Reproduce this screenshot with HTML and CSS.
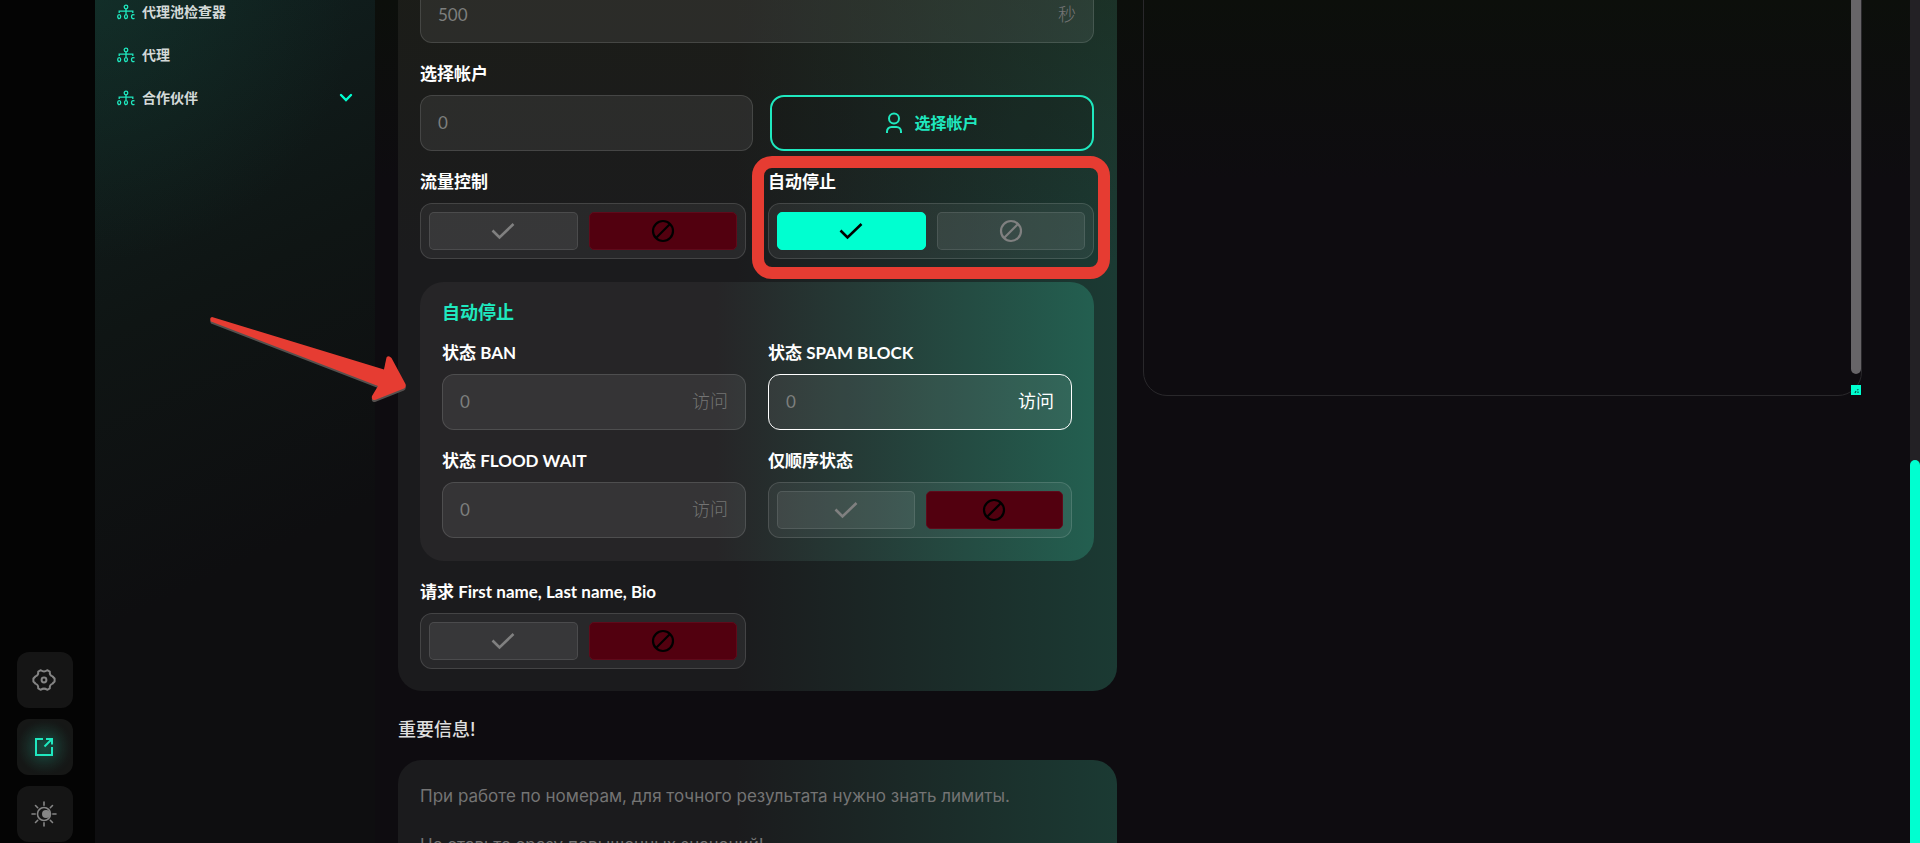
FILE: index.html
```html
<!DOCTYPE html>
<html lang="zh-CN">
<head>
<meta charset="utf-8">
<meta name="viewport" content="width=device-width, initial-scale=1">
<title>自动停止</title>
<link rel="stylesheet" href="styles.css">
</head>
<body>
<svg class="sprite" aria-hidden="true">
  <symbol id="i-tree" viewBox="0 0 18 16">
    <g fill="none" stroke="currentColor" stroke-width="1.3">
      <circle cx="9" cy="3" r="1.800"/><path d="M9 5v5.5M2.200 9V7.200h13.600V9"/>
      <ellipse cx="2.200" cy="12.600" rx="1.500" ry="2"/><ellipse cx="9" cy="12.600" rx="1.500" ry="2"/><path d="M17.500 10.900q-3-1-3 1.700t3 1.700"/>
    </g>
  </symbol>
  <symbol id="i-check" viewBox="0 0 24 24"><path d="M1.5 11.5l7 7L22.500 5" fill="none" stroke="currentColor" stroke-width="2.600"/></symbol>
  <symbol id="i-ban" viewBox="0 0 24 24"><g fill="none" stroke="currentColor" stroke-width="2.2"><circle cx="12" cy="12" r="10"/><path d="M5 19L19 5"/></g></symbol>
</svg>
<div class="app">
  <aside class="rail">
    <button class="rail-btn" type="button" aria-label="设置">
      <svg width="24" height="24" viewBox="0 0 24 24" fill="none" stroke="currentColor" stroke-width="2" stroke-linejoin="round"><circle cx="12" cy="12" r="2.400"/><path d="M8.800 2.200Q12 4.600 15.200 2.200L17.800 3.600Q17.400 7.300 20.600 8.400Q21 9 22.600 10.500V13.500Q21 15 20.600 15.600Q17.400 16.700 17.800 20.400L15.200 21.800Q12 19.400 8.800 21.800L6.200 20.400Q6.600 16.700 3.400 15.600Q3 15 1.400 13.500V10.500Q3 9 3.400 8.400Q6.600 7.300 6.200 3.600z"/></svg>
    </button>
    <button class="rail-btn active" type="button" aria-label="打开">
      <svg width="20" height="20" viewBox="0 0 20 20" fill="none" stroke="currentColor" stroke-width="2"><path d="M9 2H2v16h16v-8M12 2H18v5.500M18 2l-7.500 7.500"/></svg>
    </button>
    <button class="rail-btn" type="button" aria-label="主题">
      <svg width="26" height="26" viewBox="0 0 26 26" fill="none" stroke="currentColor" stroke-width="1.600" stroke-linecap="round"><circle cx="13" cy="13" r="6.500"/><path d="M13 1v3.200M13 21.800V25M1 13h3.200M21.800 13H25M4.500 4.500l2.200 2.200M19.300 19.300l2.200 2.200M4.500 21.500l2.200-2.200M19.300 6.700l2.200-2.200"/><path d="M15 9a4 4 0 0 0 0 8a6 6 0 0 0 3.500-1a6 6 0 0 0 0-6a6 6 0 0 0-3.500-1z" fill="currentColor" stroke="none"/></svg>
    </button>
  </aside>

  <nav class="side">
    <a class="side-link" href="#pool"><svg width="18" height="16"><use href="#i-tree"/></svg><span>代理池检查器</span></a>
    <a class="side-link" href="#proxy"><svg width="18" height="16"><use href="#i-tree"/></svg><span>代理</span></a>
    <a class="side-link" href="#partners"><svg width="18" height="16"><use href="#i-tree"/></svg><span>合作伙伴</span>
      <svg class="chev" width="14" height="10" viewBox="0 0 14 10" fill="none" stroke="currentColor" stroke-width="2.400" stroke-linecap="round"><path d="M2 2l5 5 5-5"/></svg></a>
  </nav>

  <main class="main">
    <div class="column">
      <form class="card form">
        <div class="control"><input type="text" placeholder="500" aria-label="秒"><span class="unit">秒</span></div>
        <div class="field">
          <label class="label" for="accounts">选择帐户</label>
          <div class="pick">
            <div class="control"><input id="accounts" type="text" placeholder="0"></div>
            <button class="pick-btn" type="button"><svg width="18" height="22" viewBox="0 0 18 22" fill="none" stroke="currentColor" stroke-width="2"><circle cx="9" cy="6.500" r="5"/><path d="M2 21v-1.500a4.500 4.500 0 0 1 4.500-4.500h5a4.500 4.500 0 0 1 4.500 4.500V21"/></svg>选择帐户</button>
          </div>
        </div>
        <div class="grid">
          <div class="field">
            <span class="label" id="l-flow">流量控制</span>
            <div class="toggle" role="radiogroup" aria-labelledby="l-flow">
              <label class="opt yes"><input type="radio" name="flow" aria-label="是"><svg><use href="#i-check"/></svg></label>
              <label class="opt no"><input type="radio" name="flow" aria-label="否" checked><svg><use href="#i-ban"/></svg></label>
            </div>
          </div>
          <div class="field marked">
            <span class="label" id="l-stop">自动停止</span>
            <div class="toggle" role="radiogroup" aria-labelledby="l-stop">
              <label class="opt yes"><input type="radio" name="stop" aria-label="是" checked><svg><use href="#i-check"/></svg></label>
              <label class="opt no"><input type="radio" name="stop" aria-label="否"><svg><use href="#i-ban"/></svg></label>
            </div>
          </div>
        </div>
        <section class="sub">
          <h2 class="sub-title">自动停止</h2>
          <div class="grid">
            <div class="field">
              <label class="label" for="ban">状态 BAN</label>
              <div class="control"><input id="ban" type="text" placeholder="0"><span class="unit">访问</span></div>
            </div>
            <div class="field">
              <label class="label" for="spam">状态 SPAM BLOCK</label>
              <div class="control focus"><input id="spam" type="text" placeholder="0"><span class="unit">访问</span></div>
            </div>
            <div class="field">
              <label class="label" for="flood">状态 FLOOD WAIT</label>
              <div class="control"><input id="flood" type="text" placeholder="0"><span class="unit">访问</span></div>
            </div>
            <div class="field">
              <span class="label" id="l-seq">仅顺序状态</span>
              <div class="toggle" role="radiogroup" aria-labelledby="l-seq">
                <label class="opt yes"><input type="radio" name="seq" aria-label="是"><svg><use href="#i-check"/></svg></label>
                <label class="opt no"><input type="radio" name="seq" aria-label="否" checked><svg><use href="#i-ban"/></svg></label>
              </div>
            </div>
          </div>
          <svg class="arrow" width="200" height="90" viewBox="0 0 200 90" aria-hidden="true"><path d="M4 3L176 55.500L178.500 43.500Q180.500 41 183.500 44L197.500 70Q198.500 73 196 74.500L167 86Q163 86 164 82L170 72L3 7.500Q1 4 4 3z"/></svg>
        </section>
        <div class="grid">
          <div class="field">
            <span class="label" id="l-bio">请求 First name, Last name, Bio</span>
            <div class="toggle" role="radiogroup" aria-labelledby="l-bio">
              <label class="opt yes"><input type="radio" name="bio" aria-label="是"><svg><use href="#i-check"/></svg></label>
              <label class="opt no"><input type="radio" name="bio" aria-label="否" checked><svg><use href="#i-ban"/></svg></label>
            </div>
          </div>
        </div>
      </form>
      <h2 class="heading">重要信息!</h2>
      <section class="card notes">
        <p>При работе по номерам, для точного результата нужно знать лимиты.</p>
        <p>Не ставьте сразу повышенных значений!</p>
      </section>
    </div>
    <div class="column">
      <div class="log">
        <textarea aria-label="日志" readonly></textarea>
        <span class="log-thumb"></span>
        <svg class="log-grip" width="10" height="10" viewBox="0 0 10 10" aria-hidden="true"><path d="M4 8l1-2M6 5l1.500-.5M7 8V6.500" stroke="#075c4d" stroke-width="1.300" fill="none"/></svg>
      </div>
    </div>
  </main>
  <div class="page-scroll"><span></span></div>
</div>
</body>
</html>
```
FILE: styles.css
```css
:root {
  --accent: #00ffd0;
  --mint: #1fe8bf;
  --line: rgba(255, 255, 255, .13);
  --red: #e63c32;
}
* { box-sizing: border-box; }
body {
  margin: 0;
  background: #0e0c10;
  color: #fff;
  font-family: Inter, "Noto Sans CJK SC", sans-serif;
  font-size: 17px;
  line-height: 22px;
}
button, input, textarea { font: inherit; color: inherit; }
.sprite { position: absolute; width: 0; height: 0; }
.app { display: flex; height: 100vh; overflow: hidden; }

.rail {
  flex: 0 0 95px;
  display: flex;
  flex-direction: column;
  justify-content: flex-end;
  gap: 11px;
  padding: 0 22px 1px 17px;
  background: #040404;
}
.rail-btn {
  flex: 0 0 56px;
  display: grid;
  place-items: center;
  padding: 0 2px 0 0;
  border: 0;
  border-radius: 12px;
  background: #151515;
  color: #858585;
}
.rail-btn.active { color: var(--mint); background: radial-gradient(circle, #1a2b27 10%, #161716 70%); }
.rail-btn.active svg { filter: drop-shadow(0 0 8px #12b894); }

.side {
  flex: 0 0 280px;
  background:
    radial-gradient(ellipse 260px 260px at 0 0, rgba(22, 72, 58, .35), transparent),
    linear-gradient(155deg, #10201f, #0f1514 35%, #0e0e10 65%);
}
.side-link {
  display: flex;
  align-items: center;
  height: 43px;
  padding: 0 22px;
  gap: 7px;
  color: #d3d9d8;
  font-size: 14px;
  font-weight: 700;
  text-decoration: none;
}
.side-link:first-child { margin-top: -10px; }
.side-link svg { color: var(--mint); }
.side-link .chev { margin-left: auto; color: var(--accent); }

.main {
  flex: 1;
  min-width: 0;
  display: grid;
  grid-template-columns: 1fr 1fr;
  gap: 26px;
  padding: 0 48px 0 23px;
  background: linear-gradient(#0c0f0b, #0e0c10 180px);
}
.card {
  border-radius: 24px;
  padding: 22px 23px 22px 22px;
  background: linear-gradient(90deg, #1b1b1d 47%, #1b3a33);
}
.form {
  display: flex;
  flex-direction: column;
  gap: 20px;
  margin-top: -35px;
  background:
    linear-gradient(rgba(28, 32, 14, .35), transparent 300px),
    linear-gradient(90deg, #1b1b1d 47%, #1b3a33);
}
.field { display: flex; flex-direction: column; gap: 10px; min-width: 0; }
.label { font-family: Lato, "Noto Sans CJK SC", sans-serif; font-size: 17px; font-weight: 700; white-space: nowrap; }
.control {
  display: flex;
  align-items: center;
  min-width: 0;
  height: 56px;
  padding: 0 17px;
  border: 1px solid var(--line);
  border-radius: 12px;
  background: rgba(255, 255, 255, .07);
  color: #747474;
}
.control input {
  flex: 1;
  min-width: 0;
  padding: 0;
  border: 0;
  outline: 0;
  background: none;
  font-family: Lato, sans-serif;
}
.control input::placeholder { color: #7d7f7e; opacity: 1; }
.unit { font-size: 18px; font-weight: 300; }
.control.focus { border-color: #fff; color: #fff; }
.control.focus .unit { font-weight: 400; }
.pick { display: grid; grid-template-columns: 333fr 324fr; gap: 17px; }
.pick-btn {
  display: flex;
  align-items: center;
  justify-content: center;
  gap: 11px;
  padding: 0;
  border: 2px solid var(--mint);
  border-radius: 14px;
  background: rgba(14, 14, 16, .15);
  color: var(--mint);
  font-size: 16px;
  font-weight: 700;
}
.grid { display: grid; grid-template-columns: 1fr 1fr; gap: 20px 22px; }
.toggle {
  display: grid;
  grid-template-columns: 1fr 1fr;
  gap: 11px;
  height: 56px;
  padding: 8px;
  border: 1px solid var(--line);
  border-radius: 12px;
  background: rgba(255, 255, 255, .06);
}
.opt {
  display: grid;
  place-items: center;
  border: 1px solid rgba(255, 255, 255, .1);
  border-radius: 5px;
  background: rgba(255, 255, 255, .07);
  color: #808080;
}
.opt input { position: absolute; opacity: 0; margin: 0; }
.opt svg { width: 24px; height: 24px; }
.opt:has(:checked) { color: #000; }
.yes:has(:checked) { background: var(--accent); border-color: var(--accent); }
.no:has(:checked) { background: #52000f; border-color: #5f0a1a; }
.marked { position: relative; }
.marked::after {
  content: "";
  position: absolute;
  inset: -15px -16px -20px;
  border: 12px solid var(--red);
  border-radius: 20px;
  pointer-events: none;
}
.sub {
  position: relative;
  margin-top: 3px;
  padding: 20px 22px 23px;
  border-radius: 24px;
  background: linear-gradient(90deg, #262527 44%, #235f50);
}
.sub-title { margin: 0 0 18px; color: var(--mint); font-size: 18px; font-weight: 700; }
.arrow {
  position: absolute;
  left: -212px;
  top: 32px;
  fill: var(--red);
  filter: drop-shadow(0 2px 0 #55504e);
}
.heading { margin: 28px 0 19px; color: #dedede; font-size: 18px; font-weight: 500; }
.notes { color: #747474; font-size: 17px; padding: 25px 22px; }
.notes p { margin: 0 0 27px; white-space: nowrap; }

.log {
  position: relative;
  height: 420px;
  margin-top: -24px;
  border: 1px solid #29282b;
  border-radius: 24px;
}
.log textarea { width: 100%; height: 100%; border: 0; outline: 0; resize: none; background: none; display: block; }
.log-thumb { position: absolute; right: 0; top: 0; width: 10px; height: 397px; border-radius: 5px; background: #676568; }
.log-grip { position: absolute; right: 0; bottom: 0; background: var(--accent); }
.page-scroll { flex: 0 0 10px; background: #232125; display: flex; flex-direction: column; justify-content: flex-end; }
.page-scroll span { height: 45.400%; border-radius: 5px 5px 0 0; background: var(--accent); }
```
